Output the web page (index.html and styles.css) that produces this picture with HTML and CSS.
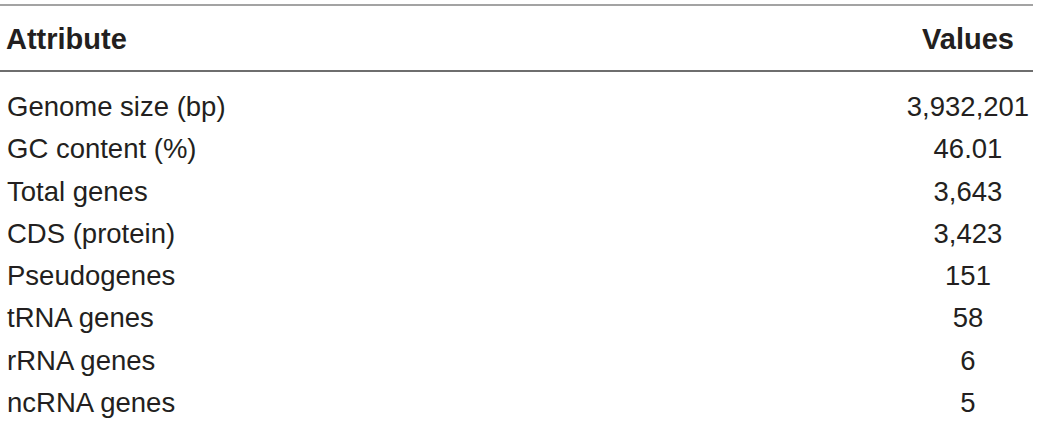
FILE: index.html
```html
<!DOCTYPE html>
<html lang="en">
<head>
    <meta charset="UTF-8">
    <meta name="viewport" content="width=device-width, initial-scale=1.0">
    <title>Genome Attributes</title>
    <link rel="stylesheet" href="styles.css">
</head>

<body>
    <!--genome summary table-->
    <table id="genomeTable">
        <thead>
            <tr>
                <th class="attr">Attribute</th>
                <th class="val">Values</th>
            </tr>
        </thead>
        <tbody>
            <tr class="firstRow"><td class="attr">Genome size (bp)</td><td class="val">3,932,201</td></tr>
            <tr><td class="attr">GC content (%)</td><td class="val">46.01</td></tr>
            <tr><td class="attr">Total genes</td><td class="val">3,643</td></tr>
            <tr><td class="attr">CDS (protein)</td><td class="val">3,423</td></tr>
            <tr><td class="attr">Pseudogenes</td><td class="val">151</td></tr>
            <tr><td class="attr">tRNA genes</td><td class="val">58</td></tr>
            <tr><td class="attr">rRNA genes</td><td class="val">6</td></tr>
            <tr><td class="attr">ncRNA genes</td><td class="val">5</td></tr>
        </tbody>
    </table>
</body>

</html>
```

FILE: styles.css
```css
body {
    margin: 0;
    background-color: #ffffff;
    font-family: "Liberation Sans", Arial, sans-serif;
    color: #231f20;
}
#genomeTable {
    width: 1033px;
    margin-top: 4px;
    border-collapse: collapse;
    border-top: 2px solid #a3a3a3;
    font-size: 27.5px;
}
th {
    font-size: 29px;
    font-weight: bold;
    line-height: 27px;
    padding: 20px 0 17px 0;
    border-bottom: 2px solid #6e6e6e;
}
td {
    line-height: 42.3px;
    padding: 0;
}
.firstRow td {
    padding-top: 14px;
}
.attr {
    text-align: left;
    padding-left: 7px;
}
th.attr {
    padding-left: 6px;
}
.val {
    width: 130px;
    text-align: center;
}
```
